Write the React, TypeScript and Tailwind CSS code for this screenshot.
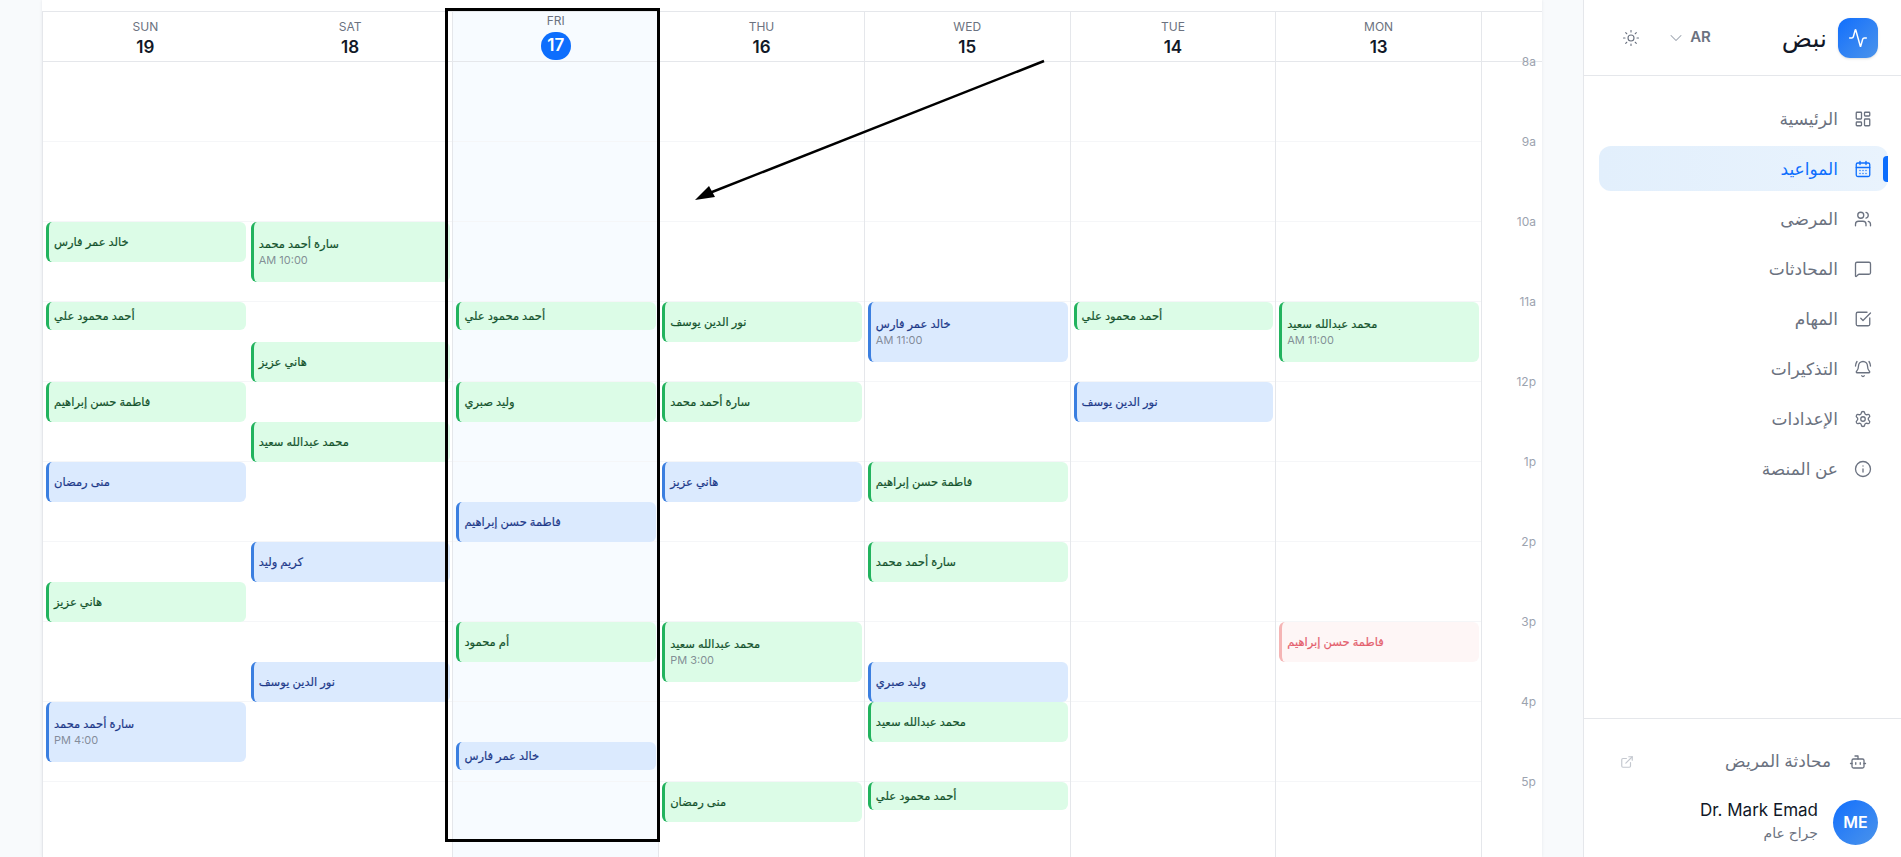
import React from 'react';
import {
  Activity,
  BellRing,
  Bot,
  CalendarDays,
  ChevronDown,
  ExternalLink,
  Info,
  LayoutDashboard,
  MessageSquare,
  Settings,
  SquareCheckBig,
  Sun,
  Users,
} from 'lucide-react';

type Tone = 'green' | 'blue' | 'red';

type Appt = {
  name: string;
  start: number;
  height: number;
  tone: Tone;
  time?: string;
};

const HOUR = 80;

const hours = ['8a', '9a', '10a', '11a', '12p', '1p', '2p', '3p', '4p', '5p', '6p'];

const days: { label: string; date: number; today?: boolean; appts: Appt[] }[] = [
  {
    label: 'SUN',
    date: 19,
    appts: [
      { name: 'خالد عمر فارس', start: 2, height: 40, tone: 'green' },
      { name: 'أحمد محمود علي', start: 3, height: 28, tone: 'green' },
      { name: 'فاطمة حسن إبراهيم', start: 4, height: 40, tone: 'green' },
      { name: 'منى رمضان', start: 5, height: 40, tone: 'blue' },
      { name: 'هاني عزيز', start: 6.5, height: 40, tone: 'green' },
      { name: 'سارة أحمد محمد', start: 8, height: 60, tone: 'blue', time: 'PM 4:00' },
    ],
  },
  {
    label: 'SAT',
    date: 18,
    appts: [
      { name: 'سارة أحمد محمد', start: 2, height: 60, tone: 'green', time: 'AM 10:00' },
      { name: 'هاني عزيز', start: 3.5, height: 40, tone: 'green' },
      { name: 'محمد عبدالله سعيد', start: 4.5, height: 40, tone: 'green' },
      { name: 'كريم وليد', start: 6, height: 40, tone: 'blue' },
      { name: 'نور الدين يوسف', start: 7.5, height: 40, tone: 'blue' },
    ],
  },
  {
    label: 'FRI',
    date: 17,
    today: true,
    appts: [
      { name: 'أحمد محمود علي', start: 3, height: 28, tone: 'green' },
      { name: 'وليد صبري', start: 4, height: 40, tone: 'green' },
      { name: 'فاطمة حسن إبراهيم', start: 5.5, height: 40, tone: 'blue' },
      { name: 'أم محمود', start: 7, height: 40, tone: 'green' },
      { name: 'خالد عمر فارس', start: 8.5, height: 28, tone: 'blue' },
    ],
  },
  {
    label: 'THU',
    date: 16,
    appts: [
      { name: 'نور الدين يوسف', start: 3, height: 40, tone: 'green' },
      { name: 'سارة أحمد محمد', start: 4, height: 40, tone: 'green' },
      { name: 'هاني عزيز', start: 5, height: 40, tone: 'blue' },
      { name: 'محمد عبدالله سعيد', start: 7, height: 60, tone: 'green', time: 'PM 3:00' },
      { name: 'منى رمضان', start: 9, height: 40, tone: 'green' },
    ],
  },
  {
    label: 'WED',
    date: 15,
    appts: [
      { name: 'خالد عمر فارس', start: 3, height: 60, tone: 'blue', time: 'AM 11:00' },
      { name: 'فاطمة حسن إبراهيم', start: 5, height: 40, tone: 'green' },
      { name: 'سارة أحمد محمد', start: 6, height: 40, tone: 'green' },
      { name: 'وليد صبري', start: 7.5, height: 40, tone: 'blue' },
      { name: 'محمد عبدالله سعيد', start: 8, height: 40, tone: 'green' },
      { name: 'أحمد محمود علي', start: 9, height: 28, tone: 'green' },
    ],
  },
  {
    label: 'TUE',
    date: 14,
    appts: [
      { name: 'أحمد محمود علي', start: 3, height: 28, tone: 'green' },
      { name: 'نور الدين يوسف', start: 4, height: 40, tone: 'blue' },
    ],
  },
  {
    label: 'MON',
    date: 13,
    appts: [
      { name: 'محمد عبدالله سعيد', start: 3, height: 60, tone: 'green', time: 'AM 11:00' },
      { name: 'فاطمة حسن إبراهيم', start: 7, height: 40, tone: 'red' },
    ],
  },
];

const toneClasses: Record<Tone, string> = {
  green: 'bg-[#dcfce7] border-[#22b35e] text-[#14532d]',
  blue: 'bg-[#dbeafe] border-[#3b7fe0] text-[#1e3a8a]',
  red: 'bg-[#fef6f6] border-[#f5b5b5] text-[#e4606d]',
};

const navItems = [
  { label: 'الرئيسية', icon: LayoutDashboard },
  { label: 'المواعيد', icon: CalendarDays, active: true },
  { label: 'المرضى', icon: Users },
  { label: 'المحادثات', icon: MessageSquare },
  { label: 'المهام', icon: SquareCheckBig },
  { label: 'التذكيرات', icon: BellRing },
  { label: 'الإعدادات', icon: Settings },
  { label: 'عن المنصة', icon: Info },
];

// SUN sits at the panel edge and has no divider on its right
function columnBorder(label: string) {
  return label === 'SUN' ? 'border-l border-[#e5e7eb]' : 'border-r border-[#e5e7eb]';
}

function Appointment({ appt }: { appt: Appt }) {
  return (
    <div
      className={`absolute left-[3px] right-[2px] flex flex-col justify-center rounded-md border-l-[3px] pl-[5px] text-left ${toneClasses[appt.tone]}`}
      style={{ top: appt.start * HOUR, height: appt.height }}
    >
      <span dir="rtl" className="self-start text-[11.5px] leading-4 font-medium [-webkit-text-stroke:0.2px_currentColor]">
        {appt.name}
      </span>
      {appt.time && <span className="text-[11px] leading-4 text-[#6b7280]/80">{appt.time}</span>}
    </div>
  );
}

function Calendar() {
  return (
    <div className="relative h-full bg-white pt-[11px] shadow-[0_0_3px_rgba(15,23,42,0.08)]">
      <div className="grid grid-cols-[repeat(7,1fr)_60px] border-t border-b border-[#e5e7eb]">
        {days.map(day => (
          <div
            key={day.label}
            className={`flex h-[49px] flex-col items-center ${columnBorder(day.label)} ${
              day.today ? 'bg-[#f7fbff] pt-px' : 'pt-[7px]'
            }`}
          >
            <span className="text-[12px] leading-4 text-[#6b7280]">{day.label}</span>
            {day.today ? (
              <span className="mt-[3px] flex h-[28px] w-[30px] items-center justify-center rounded-full bg-[#0d6efd] text-[17px] font-semibold text-white">
                {day.date}
              </span>
            ) : (
              <span className="text-[17px] leading-6 font-semibold text-[#111827]">{day.date}</span>
            )}
          </div>
        ))}
        <div />
      </div>

      <div className="grid grid-cols-[repeat(7,1fr)_60px]">
        {days.map(day => (
          <div
            key={day.label}
            className={`relative ${columnBorder(day.label)} ${day.today ? 'bg-[#f7fbff]' : ''}`}
          >
            {hours.map(hour => (
              <div key={hour} className="h-20 border-b border-[#f5f6f8]" />
            ))}
            {day.appts.map(appt => (
              <Appointment key={`${appt.name}-${appt.start}`} appt={appt} />
            ))}
          </div>
        ))}
        <div>
          {hours.map(hour => (
            <div
              key={hour}
              className="flex h-20 -translate-y-1/2 items-center justify-end pr-[6px] text-xs text-[#9ca3af]"
            >
              {hour}
            </div>
          ))}
        </div>
      </div>

      {/* annotation drawn on top of the screenshot */}
      <div className="absolute top-[8px] left-[403px] h-[834px] w-[215px] border-[3px] border-black" />
      <svg className="absolute top-0 left-0 h-[300px] w-[1100px]" viewBox="0 0 1100 300">
        <line x1="1002" y1="61" x2="665" y2="194" stroke="#000" strokeWidth="2.5" />
        <polygon points="653,200 667,186 673,197" fill="#000" />
      </svg>
    </div>
  );
}

function Sidebar() {
  return (
    <aside className="flex w-[318px] shrink-0 flex-col border-l border-[#e5e7eb] bg-white">
      <div className="flex h-[76px] shrink-0 items-center justify-end border-b border-[#e5e7eb] pr-[23px]">
        <Sun className="mr-[26px] h-[18px] w-[18px] text-[#6b7280]" strokeWidth={1.5} />
        <ChevronDown className="mr-[4px] h-5 w-5 text-[#9ca3af]" strokeWidth={1.25} />
        <span className="mr-[71px] text-[15px] font-semibold text-[#6b7280]">AR</span>
        <span className="mr-[11px] text-[25px] leading-8 font-medium text-[#111827]">نبض</span>
        <div className="flex h-10 w-10 items-center justify-center rounded-xl bg-gradient-to-br from-[#0d6efd] to-[#4a93ea] shadow-sm">
          <Activity className="h-5 w-5 text-white" strokeWidth={1.75} />
        </div>
      </div>

      <nav className="flex flex-1 flex-col gap-[5px] pt-[20px] pr-[13px] pl-[15px]">
        {navItems.map(item => {
          const Icon = item.icon;
          return (
            <div
              key={item.label}
              className={`relative flex h-[45px] items-center justify-end gap-4 rounded-xl pr-[16px] text-[17px] font-medium ${
                item.active
                  ? 'bg-gradient-to-r from-[#e2effc] to-[#e9f3fd] text-[#0d6efd]'
                  : 'text-[#6b7280]'
              }`}
            >
              <span className="pt-[2px]">{item.label}</span>
              <Icon className="h-[18px] w-[18px]" strokeWidth={1.75} />
              {item.active && (
                <span className="absolute top-[10px] right-0 h-[26px] w-[5px] rounded-l bg-[#0d6efd]" />
              )}
            </div>
          );
        })}
      </nav>

      <div className="shrink-0 border-t border-[#e5e7eb] pr-[23px] pb-[12px]">
        <div className="flex h-[80px] items-center justify-end pt-[6px] pr-[11px] pl-[36px]">
          <ExternalLink className="mr-auto h-[14px] w-[14px] text-[#c4c8cf]" />
          <span className="text-[17px] font-medium text-[#6b7280]">محادثة المريض</span>
          <Bot className="ml-[18px] h-[18px] w-[18px] text-[#6b7280]" strokeWidth={1.75} />
        </div>
        <div className="flex items-center justify-end gap-[15px]">
          <div className="flex flex-col items-end">
            <span className="text-[17px] leading-[22px] font-normal text-[#111827]">Dr. Mark Emad</span>
            <span className="mt-[2px] mb-[2px] text-sm leading-5 text-[#6b7280]">جراح عام</span>
          </div>
          <div className="flex h-[45px] w-[45px] items-center justify-center rounded-full bg-gradient-to-br from-[#0d6efd] to-[#4a93ea] text-base font-semibold text-white">
            ME
          </div>
        </div>
      </div>
    </aside>
  );
}

export default function App() {
  return (
    <div className="flex h-screen overflow-hidden bg-[#f8fafc] font-['Inter','Noto_Sans','DejaVu_Sans',sans-serif]">
      <main className="min-w-0 flex-1 pr-[41px] pl-[42px]">
        <Calendar />
      </main>
      <Sidebar />
    </div>
  );
}
